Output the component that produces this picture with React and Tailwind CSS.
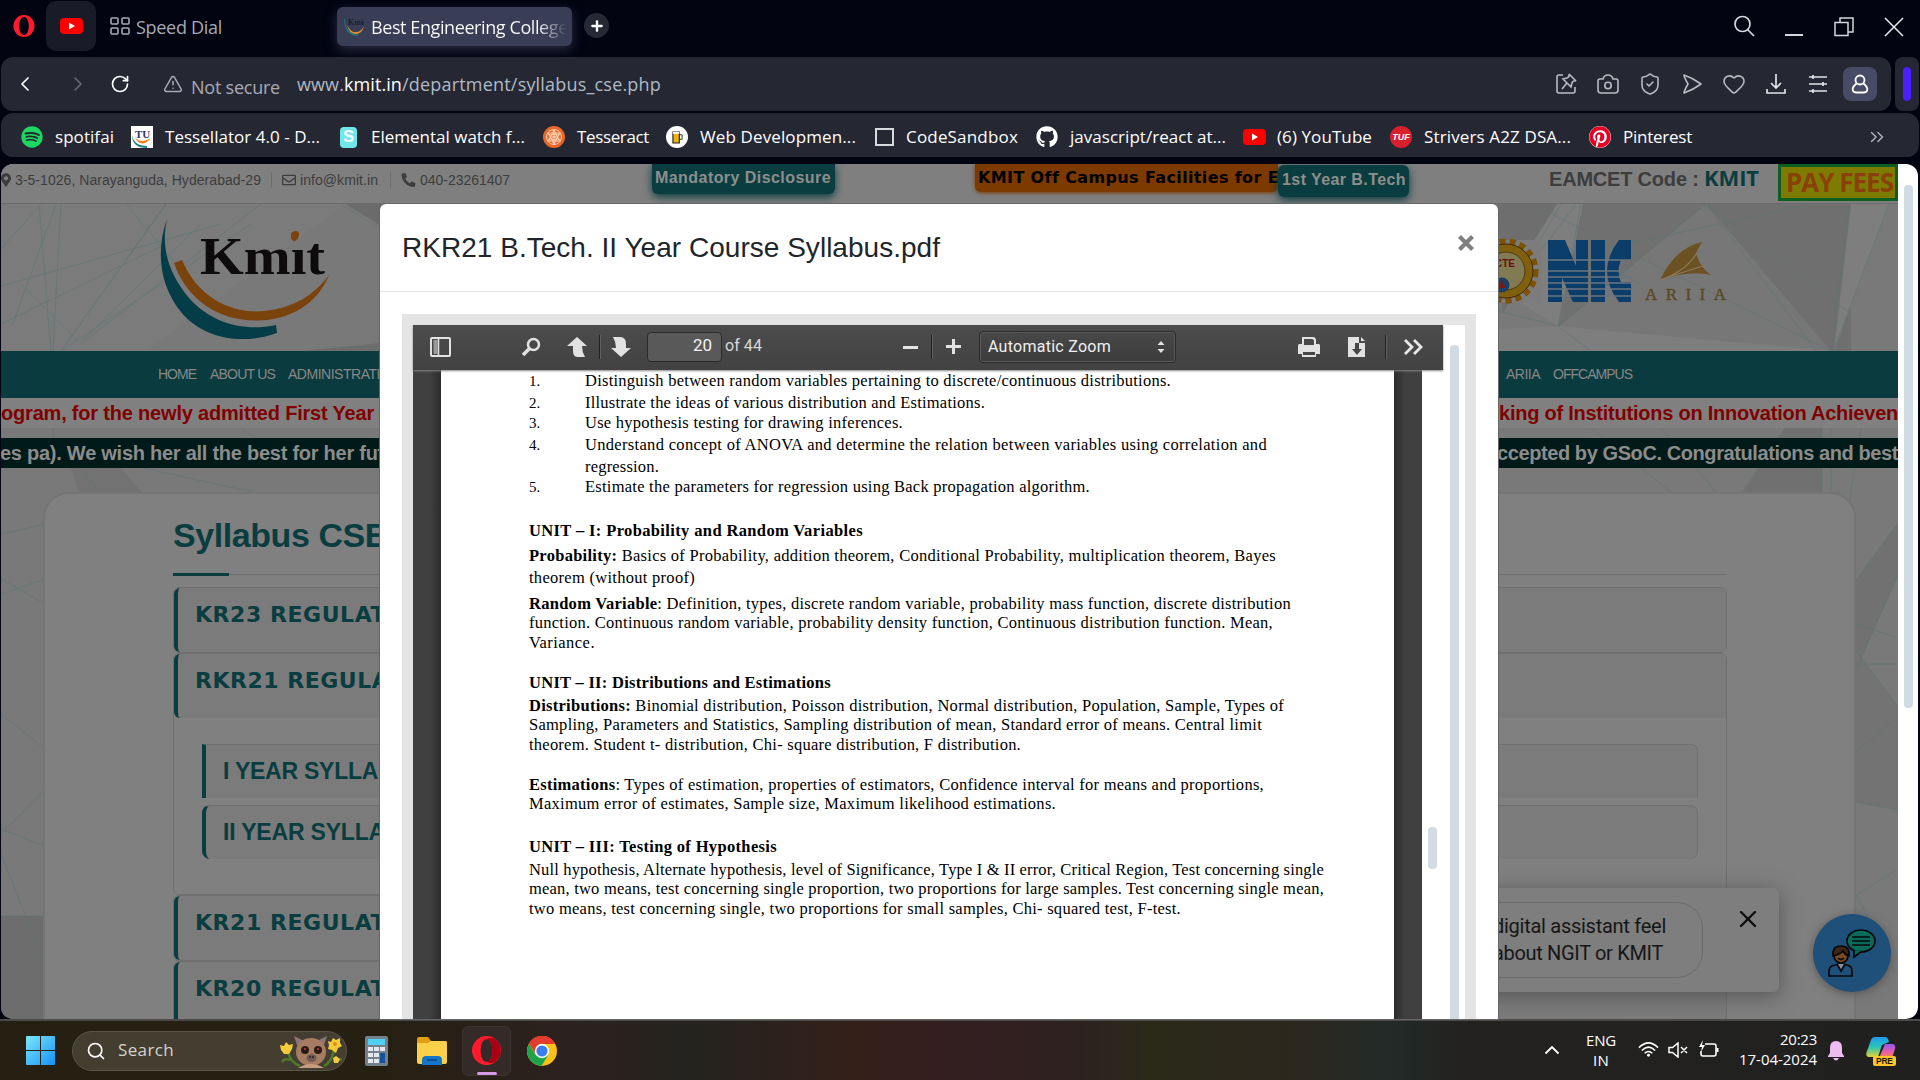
import React, { useLayoutEffect, useRef } from "react";
import { ShieldCheck, Heart, TriangleAlert, Search, RotateCw, ChevronsRight, ChevronLeft, ChevronRight, X, Plus } from "lucide-react";
import { FaSpotify, FaGithub, FaPinterest, FaMapMarkerAlt, FaRegEnvelope, FaPhoneAlt } from "react-icons/fa";

const UI = "font-['Open_Sans','Noto_Sans',sans-serif]";
const SANS = "font-['Liberation_Sans',Arial,sans-serif]";
const VERD = "font-['DejaVu_Sans',Verdana,sans-serif]";

/* A run of text whose tracking is adjusted so that it fills a given width. */
function Fit({ w, className = "", children }) {
  const ref = useRef(null);
  useLayoutEffect(() => {
    const el = ref.current;
    el.style.letterSpacing = "0px";
    const natural = el.getBoundingClientRect().width;
    el.style.letterSpacing = (w - natural) / el.textContent.length + "px";
  }, [w]);
  return (
    <span ref={ref} className={"inline-block shrink-0 whitespace-pre " + className}>
      {children}
    </span>
  );
}

function OperaMark({ className }) {
  return (
    <svg viewBox="0 0 24 24" className={className}>
      <path fillRule="evenodd" fill="#ff1b2d" d="M12 0a12 12 0 1 0 0 24a12 12 0 0 0 0-24zM12 2.6c3 0 4.8 4.2 4.8 9.4s-1.800 9.400-4.800 9.400s-4.800-4.200-4.800-9.400s1.800-9.400 4.800-9.400z" />
      <path fill="#a70014" d="M12 2.600c2-1.400 5-1.400 7.500.2A12 12 0 0 1 19.500 21.200c-2.500 1.600-5.500 1.600-7.500.2c3 0 4.800-4.200 4.800-9.400S15 2.600 12 2.600z" />
    </svg>
  );
}

function OperaOutline({ className }) {
  return (
    <svg viewBox="0 0 24 24" className={className}>
      <path fillRule="evenodd" fill="#ff1b2d" d="M12 0a11.500 12 0 1 0 0 24a11.500 12 0 0 0 0-24zM12 2.200c3.200 0 5.200 4.200 5.200 9.800s-2 9.800-5.200 9.800s-5.200-4.200-5.200-9.800s2-9.800 5.200-9.800z" />
    </svg>
  );
}

function YouTubeMark() {
  return (
    <svg viewBox="0 0 23 16" className="h-4 w-[23px] shrink-0">
      <rect width="23" height="16" rx="4" fill="#ff0000" />
      <path d="M9 4.500l6 3.500l-6 3.500z" fill="#fff" />
    </svg>
  );
}

function KmitFavicon({ className }) {
  return (
    <svg viewBox="0 0 20 20" className={className}>
      <path d="M1 2q0 14 13 15v2Q0 19 0 2z" fill="#1f6f7d" />
      <path d="M3 8q4 8 9 7q5 0 8-6q-2 8-8 8q-7 0-9-9z" fill="#e08a2c" />
      <text x="4" y="8" fontSize="8" fontFamily="Liberation Serif" fontWeight="bold" fill="#1b1d2c">Kmit</text>
    </svg>
  );
}

function TabStrip() {
  return (
    <div className={"flex h-[57px] items-start text-[#a6a9b3] " + UI}>
      <OperaOutline className="ml-3 mt-[15px] h-[22px] w-6 shrink-0" />
      <div className="ml-[10px] mt-px flex h-[50px] w-[50px] shrink-0 items-center justify-center rounded-[10px] bg-[#191b29]">
        <YouTubeMark />
      </div>
      <svg viewBox="0 0 20 18" className="ml-[14px] mt-[17px] h-[18px] w-5 shrink-0" fill="none" stroke="#a6a9b3" strokeWidth="1.600">
        <rect x="1" y="1" width="7" height="6" rx="1" /><rect x="12" y="1" width="7" height="6" rx="1" />
        <rect x="1" y="11" width="7" height="6" rx="1" /><rect x="12" y="11" width="7" height="6" rx="1" />
      </svg>
      <div className="ml-[6px] mt-[15px] w-[201px] text-[18px] leading-6"><Fit w={86}>Speed Dial</Fit></div>
      <div className="mt-[7px] flex h-[39px] w-[235px] shrink-0 items-center overflow-hidden rounded-md bg-[#3a3d56] shadow-[0_4px_12px_#2a2c40]">
        <KmitFavicon className="ml-[7px] h-5 w-5 shrink-0" />
        <div className="ml-[7px] w-[196px] overflow-hidden bg-gradient-to-r from-white from-85% to-[#3a3d56] bg-clip-text text-[18px] leading-6 text-transparent">
          <Fit w={205}>Best Engineering Colleges</Fit>
        </div>
      </div>
      <div className="ml-3 mt-[13px] flex h-[25px] w-[25px] items-center justify-center rounded-full bg-[#262835]">
        <Plus className="h-4 w-4 text-white" strokeWidth={3.500} />
      </div>
      <div className="flex-1" />
      <svg viewBox="0 0 24 24" className="mr-[29px] mt-[15px] h-6 w-6" fill="none" stroke="#d5d6dc" strokeWidth="1.700"><circle cx="10.500" cy="9" r="7.500" /><path d="M15.500 14.500L22 21" /></svg>
      <div className="mr-[31px] mt-[34px] h-[2px] w-[18px] bg-[#d5d6dc]" />
      <svg viewBox="0 0 20 20" className="mr-[30px] mt-[17px] h-5 w-5" fill="none" stroke="#d5d6dc" strokeWidth="1.500"><rect x="1" y="5.500" width="13" height="13" /><path d="M6 5V1h13v14h-5" /></svg>
      <svg viewBox="0 0 20 20" className="mr-4 mt-[17px] h-5 w-5" stroke="#e5e6ea" strokeWidth="1.600"><path d="M1 1l18 18M19 1L1 19" /></svg>
    </div>
  );
}

function AddressBar() {
  const ic = "h-6 w-6 shrink-0";
  return (
    <div className="flex h-[54px] gap-1 pl-px pr-px">
      <div className={"flex w-[1890px] items-center rounded-xl bg-[#252733] text-[18px] leading-6 text-[#a9abb4] " + UI}>
        <ChevronLeft className="ml-3 h-6 w-6 text-white" strokeWidth={1.700} />
        <ChevronRight className="ml-[29px] h-6 w-6 text-[#6b6d78]" strokeWidth={1.500} />
        <RotateCw className="ml-5 h-5 w-5 text-white" strokeWidth={2} />
        <TriangleAlert className="ml-[33px] h-5 w-5 text-[#a9abb4]" strokeWidth={1.800} />
        <div className="ml-2 mt-[5px] w-[106px]"><Fit w={89}>Not secure</Fit></div>
        <div className="-mt-px text-[#aebac6]">
          <Fit w={47}>www.</Fit><Fit w={58} className="text-white">kmit.in</Fit><Fit w={259}>/department/syllabus_cse.php</Fit>
        </div>
        <div className="flex-1" />
        <div className="mr-[14px] flex items-center gap-[18px] text-[#b9bbc3]">
          <svg viewBox="0 0 24 24" className={ic} fill="none" stroke="currentColor" strokeWidth="1.600"><path d="M9 3H5q-2 0-2 2v14q0 2 2 2h14q2 0 2-2v-4" /><path d="M15 2l7 7q-3-1-4 2l-1 4l-8-8l4-1q3-1 2-4zM12.500 11.500L8 17" /></svg>
          <svg viewBox="0 0 24 24" className={ic} fill="none" stroke="currentColor" strokeWidth="1.600"><path d="M2 9q0-2 2-2h3q1-4 5-4t5 4h3q2 0 2 2v9q0 3-3 3H5q-3 0-3-3z" /><circle cx="12" cy="13.500" r="3.200" /></svg>
          <ShieldCheck className={ic} strokeWidth={1.600} />
          <svg viewBox="0 0 24 24" className={ic} fill="none" stroke="currentColor" strokeWidth="1.600" strokeLinejoin="round"><path d="M4 3q9 3 17 9q-8 6-17 9q0-2 4-9Q4 5 4 3z" /></svg>
          <Heart className={ic} strokeWidth={1.600} />
          <svg viewBox="0 0 24 24" className={ic} fill="none" stroke="#e2e3e7" strokeWidth="1.700"><path d="M12 2v14M7 11l5 5l5-5M3 17v4h18v-4" /></svg>
          <svg viewBox="0 0 24 24" className={ic} fill="none" stroke="#e2e3e7" strokeWidth="1.700"><path d="M3 5h18M3 12h18M3 19h18M7 3v4M17 10v4M7 17v4" /></svg>
          <div className="-ml-[5px] flex h-[34px] w-[34px] items-center justify-center rounded-lg bg-[#484b66]">
            <svg viewBox="0 0 18 20" className="h-5 w-[18px]" fill="none" stroke="#fff" strokeWidth="1.800"><circle cx="9" cy="6" r="4.500" /><path d="M5.500 9.500C0 14 1 18 5 18.500h8c4-.5 5-4.500-.5-9" /></svg>
          </div>
        </div>
      </div>
      <div className="flex flex-1 items-center justify-center rounded-lg bg-[#252733]">
        <div className="h-[34px] w-2 rounded bg-[#4b1fff]" />
      </div>
    </div>
  );
}

const round = "flex h-[22px] w-[22px] shrink-0 items-center justify-center rounded-full";
const BOOKMARKS = [
  ["w-[110px]", 59, "spotifai", <FaSpotify className="h-[22px] w-[22px] text-[#1ed760]" />],
  ["w-[206px]", 155, "Tessellator 4.0 - D...",
    <svg viewBox="0 0 22 22" className="h-[22px] w-[22px] bg-white"><path d="M1 9q2 11 15 11v2Q1 22 1 9z" fill="#1f7f8c" /><path d="M3 10q6 9 17 2q-10 12-17-2z" fill="#e88024" /><text x="4" y="12" fontSize="11" fontWeight="bold" fontFamily="Liberation Serif" fill="#34307a">TU</text></svg>],
  ["w-[206px]", 154, "Elemental watch f...",
    <div className="ml-[3px] flex h-[21px] w-[17px] items-center justify-center rounded bg-[#6fe7ea] font-['Liberation_Sans'] text-[16px] font-bold text-white">S</div>],
  ["w-[123px]", 72, "Tesseract",
    <svg viewBox="0 0 22 22" className="h-[22px] w-[22px]" fill="none" stroke="#ffd0b0"><circle cx="11" cy="11" r="11" fill="#e8672a" stroke="none" /><circle cx="11" cy="11" r="7.500" /><circle cx="11" cy="11" r="3" /><path d="M11 3v16M4 7l14 8M18 7L4 15M5 7h12L11 18zM5 15h12L11 4z" /></svg>],
  ["w-[206px]", 156, "Web Developmen...",
    <div className={round + " bg-white"}><svg viewBox="0 0 12 14" className="h-[13px] w-[11px]"><path d="M1 1h7v12H1z" fill="#eab308" stroke="#222" strokeWidth="1.200" /><path d="M8 4h3v5H8" fill="none" stroke="#222" /><path d="M1 1h7v2H1z" fill="#fff" /></svg></div>],
  ["w-[164px]", 112, "CodeSandbox", <div className="ml-[3px] h-[18px] w-[19px] border-2 border-[#d9dade]" />],
  ["w-[207px]", 156, "javascript/react at...", <FaGithub className="h-[22px] w-[22px] text-white" />],
  ["w-[147px]", 95, "(6) YouTube", <YouTubeMark />],
  ["w-[199px]", 147, "Strivers A2Z DSA...", <div className={round + " bg-[#d81f2e] font-['Liberation_Sans'] text-[9px] font-bold italic text-white"}>TUF</div>],
  ["w-[104px]", 69, "Pinterest", <div className={round + " bg-white"}><FaPinterest className="h-[22px] w-[22px] text-[#e60023]" /></div>],
];

function BookmarksBar() {
  return (
    <div className={"mx-px mt-[2px] flex h-11 items-center rounded-xl bg-[#252733] pl-5 pt-1 text-[17px] leading-6 text-white " + UI}>
      {BOOKMARKS.map(([cls, w, label, icon]) => (
        <div key={label} className={"flex shrink-0 items-center " + cls}>
          <div className="w-[34px] shrink-0">{icon}</div>
          <Fit w={w}>{label}</Fit>
        </div>
      ))}
      <ChevronsRight className="ml-[173px] h-[22px] w-[22px] text-[#b5b7bf]" strokeWidth={1.500} />
    </div>
  );
}

function Backdrop() {
  return (
    <svg viewBox="0 0 1897 855" className="absolute left-0 top-0 h-full w-full" preserveAspectRatio="none">
      <rect width="1897" height="855" fill="#797979" />
      <path d="M0 40h345l-200 147H0z" fill="#7b7b7b" />
      <path d="M345 40h35v22z" fill="#6b6b6b" />
      <path d="M300 187l80-8v8z" fill="#6d6d6d" />
      <path d="M1497 40h60l-55 110z" fill="#6e6e6e" />
      <path d="M1556 40l26 0l-25 122l-56-34z" fill="#7e7e7e" />
      <path d="M1582 40h123l-148 124z" fill="#707070" />
      <path d="M1705 40l-148 124l275 23z" fill="#777" />
      <path d="M1705 40h145v147h-20z" fill="#6f6f6f" />
      <path d="M1850 40l38 0l-55 147z" fill="#7e7e7e" />
      <path d="M1497 187v-22l60-3l275 25z" fill="#7e7e7e" />
      <path d="M1784 264h37v66h-80z" fill="#707070" />
      <path d="M70 304l50 0l22 26H78z" fill="#727272" />
      <path d="M0 752h44v103H0z" fill="#6d6d6d" />
      <path d="M1855 416L1897 359V411L1855 506z" fill="#717171" />
      <path d="M1855 486L1897 543V646L1855 638z" fill="#737373" />
      <g stroke="#5b7474" strokeWidth="1" fill="none" opacity="0.550">
        <path d="M0 85L40 40M12 160L55 40M50 187L38 40M52 187L60 40M60 187L165 40M80 180L260 40M0 122L220 60M78 178L20 120M80 178L200 60M60 187L250 60M125 40L200 130M0 160L165 80M340 40l40 25M165 40L60 187M52 264v30M240 264L270 285" />
        <path d="M1497 150L1560 40M1557 162L1580 40M1557 162L1705 40M1500 140L1575 40M1530 40L1830 187M1705 40L1815 187M1705 40L1850 150M1557 162L1497 147M1557 162L1590 187M1832 187L1888 40M1830 187L1848 40M1557 95L1810 40M1640 120L1560 80M1590 264L1670 328M1660 264L1715 328M1784 264L1740 330M1821 264V330M1830 264V330M1860 264L1848 340" />
        <path d="M0 550L44 585M0 370L44 360M0 430L44 415M0 415L44 440M0 670L44 625M0 665L44 682M0 690L44 800M0 752h44M80 304L100 330M142 304L320 343L190 330M1855 416L1897 359M1855 506L1897 411M1855 460l42 14M1855 500h42M1855 486L1897 543M1855 588L1897 553M1855 638L1897 646M1857 730l40-25M1855 730l40 80" />
      </g>
    </svg>
  );
}

function TopBar() {
  const sep = "h-4 w-px shrink-0 bg-[#6d6d6d]";
  return (
    <div className={"relative flex h-10 items-start border-b border-[#6b6b6b] bg-[#7f7f7f] text-[14px] leading-4 text-[#3d3d3d] " + SANS}>
      <div className="flex w-[651px] shrink-0 items-center pt-2">
        <FaMapMarkerAlt className="h-[14px] w-[10px] shrink-0 mr-1" />
        <Fit w={246}>3-5-1026, Narayanguda, Hyderabad-29</Fit>
        <div className={sep + " mx-[10px]"} />
        <FaRegEnvelope className="mr-1 h-[14px] w-[14px]" />
        <Fit w={78}>info@kmit.in</Fit>
        <div className={sep + " ml-3 mr-[10px]"} />
        <FaPhoneAlt className="mr-1 h-[14px] w-[15px]" />
        <Fit w={90}>040-23261407</Fit>
      </div>
      <div className="h-[30px] w-[183px] shrink-0 rounded-b-md bg-[#0a3d40] pl-[3px] pt-1 text-[16px] font-bold leading-5 text-[#8e8e8e] shadow-[0_3px_8px_#0a3d40]">
        <Fit w={176}>Mandatory Disclosure</Fit>
      </div>
      <div className={"ml-[140px] h-7 w-[303px] shrink-0 rounded-b-md bg-[#7d3a00] pl-[3px] pt-1 text-[16px] font-bold leading-5 text-black shadow-[0_1px_4px_#7d3a00] " + VERD}>
        <Fit w={300}>KMIT Off Campus Facilities for E</Fit>
      </div>
      <div className="relative mt-px h-8 w-[131px] shrink-0 rounded-md bg-[#0a3d40] pl-[4px] pt-[5px] text-[16px] font-bold leading-5 text-[#8e8e8e] shadow-[0_3px_8px_#0a3d40]">
        <Fit w={124}>1st Year B.Tech</Fit>
      </div>
      <div className="ml-[140px] w-[229px] pt-[3px] text-[20px] font-bold leading-6">
        <Fit w={155}>EAMCET Code : </Fit>
        <Fit w={55} className={"-mt-1 align-baseline text-[22px] text-[#0a3d40] " + UI}>KMIT</Fit>
      </div>
      <div className={"h-[37px] w-[120px] shrink-0 border-[3px] border-[#0e5e22] bg-[#7e7c00] pl-[5px] pt-px text-[26px] font-bold leading-7 text-[#8a400b] " + UI}>
        <Fit w={107}>PAY FEES</Fit>
      </div>
    </div>
  );
}

function KmitLogo() {
  return (
    <svg viewBox="160 215 175 125" className="ml-[158px] mt-[11px] h-[125px] w-[175px]">
      <path d="M168 219C157 250 160 285 182 312C205 340 245 345 278 333L277 325C245 332 212 323 190 298C168 272 162 245 168 219z" fill="#043c47" />
      <path d="M175 263L183 260C200 300 235 314 265 311C295 308 315 295 330 275C318 305 290 320 258 320.500C220 321 188 300 175 263z" fill="#7a430b" />
      <text x="201" y="274" fontSize="52" fontFamily="Liberation Serif" fontWeight="bold" fill="#0d0b0b" textLength="125" lengthAdjust="spacingAndGlyphs">Kmıt</text>
      <path d="M292 237q-1-6 5-6q5 1 2 7q-2 4-4 3q-3-1-3-4z" fill="#7a430b" />
    </svg>
  );
}

function Partners() {
  return (
    <svg viewBox="1497 238 240 66" className="h-[66px] w-[240px]">
      <path d="M1497 240h45v63h-45z" fill="#7c7c7c" />
      <circle cx="1506" cy="271" r="29" fill="none" stroke="#7d5206" strokeWidth="7" strokeDasharray="6 4" />
      <circle cx="1506" cy="271" r="27" fill="#80600c" stroke="#3f2b08" strokeWidth="1" />
      <circle cx="1506" cy="271" r="19" fill="#827a52" stroke="#4c3a13" strokeWidth="1" />
      <circle cx="1502" cy="285" r="7.500" fill="#1c3f63" /><path d="M1499 288l3-8l3 8z" fill="#80140f" />
      <text x="1495" y="267" fontSize="10" fontFamily="Liberation Sans" fontWeight="bold" fill="#6b0d12">CTE</text>
      <g fill="#0b3d6b">
        <path d="M1548 240h17l11 26v-26h12v62h-15l-11-24v24h-14zM1591 240h14v62h-14zM1631 240v20h-10q-5 11 0 22h10v20h-12q-24-31 0-62z" />
      </g>
      <path d="M1548 260h83M1548 271h83M1548 277h83M1548 283h83M1548 289h83M1548 296h83" stroke="#6b7680" strokeWidth="1.500" />
      <path d="M1660 280Q1675 248 1702 242L1696 253Q1700 268 1711 275Q1690 270 1660 280z" fill="#6c5122" />
      <path d="M1660 280Q1685 272 1697 253M1662 279Q1690 270 1706 265" stroke="#8b7a5c" strokeWidth="1.200" fill="none" />
      <text x="1645" y="300" fontSize="17" fontFamily="Liberation Serif" fill="#5b4a20" stroke="#5b4a20" strokeWidth="0.400" textLength="81" lengthAdjust="spacing">ARIIA</text>
    </svg>
  );
}

function Accordion({ label, w, className = "", children }) {
  return (
    <div className={"rounded-md border border-[#6f6f6f] " + className}>
      <div className="h-16 rounded-l-md border-l-4 border-[#0a3d40] bg-[#7b7b7b] pl-[17px] pt-[14px]">
        <Fit w={w} className={"text-[22px] font-bold leading-[26px] text-[#0a3d40] " + VERD}>{label}</Fit>
      </div>
      {children}
    </div>
  );
}

function SubItem({ label, w, className }) {
  return (
    <div className={"mr-7 ml-7 h-[54px] border-l-4 border-r border-t border-l-[#0a3d40] border-r-[#707070] border-t-[#707070] bg-[#7b7b7b] pl-[17px] pt-[13px] " + className}>
      <Fit w={w} className={"text-[23px] font-bold leading-[26px] text-[#0a3d40] " + SANS}>{label}</Fit>
    </div>
  );
}

function SitePage() {
  const band = "relative flex items-center justify-between overflow-hidden whitespace-nowrap text-[20px] font-bold leading-6 ";
  return (
    <div className="relative ml-px h-[855px] w-[1897px] shrink-0 overflow-hidden rounded-bl-xl rounded-tl-xl">
      <Backdrop />
      <TopBar />
      <div className="relative flex h-[147px] items-start justify-between">
        <KmitLogo />
        <div className="mr-[161px] mt-[34px]"><Partners /></div>
      </div>
      <div className={"relative flex h-[47px] items-center bg-[#0a3b3e] pb-px text-[14px] text-[#888] " + SANS}>
        <Fit w={38} className="ml-[157px]">HOME</Fit>
        <Fit w={65} className="ml-[14px]">ABOUT US</Fit>
        <Fit w={112} className="ml-[13px]">ADMINISTRATION</Fit>
        <Fit w={34} className="ml-[1106px]">ARIIA</Fit>
        <Fit w={79} className="ml-[13px]">OFFCAMPUS</Fit>
      </div>
      <div className={band + "h-[30px] bg-[#808080] text-[#800000] " + SANS}>
        <Fit w={373}>ogram, for the newly admitted First Year</Fit>
        <Fit w={399}>king of Institutions on Innovation Achieven</Fit>
      </div>
      <div className={band + "mt-[10px] h-[30px] bg-[#001a19] text-[#8c8c8c] " + SANS}>
        <Fit w={384} className="-ml-px">es pa). We wish her all the best for her fut</Fit>
        <Fit w={401}>ccepted by GSoC. Congratulations and best</Fit>
      </div>
      <div className="relative ml-[42px] mt-6 h-[560px] w-[1813px] rounded-[26px] border-2 border-[#757575] bg-[#808080] pl-[128px] pr-[127px] pt-[21px]">
        <div className="h-[59px]"><Fit w={214} className={"text-[34px] font-bold leading-10 text-[#0a3d40] " + SANS}>Syllabus CSE</Fit></div>
        <div className="border-b border-[#6f6f6f]" />
        <div className="-mt-[2px] h-[3px] w-14 bg-[#0a3d40]" />
        <Accordion className="mt-[11px]" label="KR23 REGULATION" w={238} />
        <Accordion label="RKR21 REGULATION" w={255}>
          <div className="h-[176px] pt-[26px]">
            <SubItem label="I YEAR SYLLABUS" w={203} className="rounded-tr-md" />
            <SubItem label="II YEAR SYLLABUS" w={210} className="mt-[7px] rounded-lg" />
          </div>
        </Accordion>
        <Accordion label="KR21 REGULATION" w={238} />
        <Accordion label="KR20 REGULATION" w={238} />
      </div>
      <div className="absolute left-[1400px] top-[724px] flex h-[104px] w-[378px] rounded-md bg-[#7e7e7e] pt-[14px] shadow-[0_4px_20px_#555]">
        <div className="h-[76px] w-[302px] rounded-r-[26px] border border-[#6c6c6c] pl-[91px] pt-[10px] font-['Roboto'] text-[20px] leading-[27px] text-[#161616]">
          <Fit w={173}>digital assistant feel</Fit><Fit w={170}>about NGIT or KMIT</Fit>
        </div>
        <X className="ml-[31px] mt-[3px] h-7 w-7 text-[#0c0c0c]" strokeWidth={2} />
      </div>
      <div className="absolute left-[1812px] top-[750px] h-[78px] w-[78px] rounded-full bg-[#1e507a] shadow-[0_2px_10px_#555]">
        <svg viewBox="0 0 78 78" className="h-[78px] w-[78px]" stroke="#06080a" strokeWidth="1.700">
          <ellipse cx="48" cy="27" rx="14" ry="11" fill="#086b59" /><path d="M41 36l0 7l8-6" fill="#086b59" />
          <path d="M39 23h18M39 27h18M39 31h18" />
          <path d="M16 62v-5q0-5 6-6l4-1h4l4 1q5 1 5 6v5z" fill="#1e507a" /><path d="M24 50l4 7l4-7" fill="#8890a0" />
          <circle cx="28" cy="42" r="7" fill="#7a4a22" /><path d="M20 42q-1-10 8-10t8 10q-4-1-6-5q-4 4-10 5z" fill="#3d2413" />
          <path d="M25 44q3 3 6 0" fill="none" />
        </svg>
      </div>
    </div>
  );
}

const PDF_LINES = [
  ["h-[21px]", 586, "", "Distinguish between random variables pertaining to discrete/continuous distributions.", "1."],
  ["h-[22px]", 400, "", "Illustrate the ideas of various distribution and Estimations.", "2."],
  ["h-[20px]", 318, "", "Use hypothesis testing for drawing inferences.", "3."],
  ["h-[22px]", 682, "", "Understand concept of ANOVA and determine the relation between variables using correlation and", "4."],
  ["h-[22px]", 74, "", "regression.", " "],
  ["h-[20px]", 505, "", "Estimate the parameters for regression using Back propagation algorithm.", "5."],
  ["h-[44px]", 334, "UNIT – I: Probability and Random Variables", ""],
  ["h-[25px]", 747, "Probability:", " Basics of Probability, addition theorem, Conditional Probability, multiplication theorem, Bayes"],
  ["h-[22px]", 166, "", "theorem (without proof)"],
  ["h-[26px]", 762, "Random Variable", ": Definition, types, discrete random variable, probability mass function, discrete distribution"],
  ["h-[19px]", 744, "", "function. Continuous random variable, probability density function, Continuous distribution function. Mean,"],
  ["h-[20px]", 66, "", "Variance."],
  ["h-[40px]", 302, "UNIT – II: Distributions and Estimations", ""],
  ["h-[23px]", 755, "Distributions:", " Binomial distribution, Poisson distribution, Normal distribution, Population, Sample, Types of"],
  ["h-[19px]", 733, "", "Sampling, Parameters and Statistics, Sampling distribution of mean, Standard error of means. Central limit"],
  ["h-[20px]", 492, "", "theorem. Student t- distribution, Chi- square distribution, F distribution."],
  ["h-[40px]", 735, "Estimations", ": Types of estimation, properties of estimators, Confidence interval for means and proportions,"],
  ["h-[19px]", 527, "", "Maximum error of estimates, Sample size, Maximum likelihood estimations."],
  ["h-[43px]", 248, "UNIT – III: Testing of Hypothesis", ""],
  ["h-[23px]", 795, "", "Null hypothesis, Alternate hypothesis, level of Significance, Type I & II error, Critical Region, Test concerning single"],
  ["h-[19px]", 795, "", "mean, two means, test concerning single proportion, two proportions for large samples. Test concerning single mean,"],
  ["h-[20px]", 652, "", "two means, test concerning single, two proportions for small samples, Chi- squared test, F-test."],
];

const Sep = ({ className }) => <div className={"h-6 w-px shrink-0 bg-[#222] shadow-[1px_0_0_#606060] " + className} />;

function PdfToolbar() {
  return (
    <div className={"relative z-10 flex h-[45px] w-[1030px] items-center bg-gradient-to-b from-[#4c4c4c] to-[#424242] pb-[2px] text-[#d9d9d9] shadow-[0_1px_2px_#888] " + SANS}>
      <svg viewBox="0 0 21 20" className="ml-[17px] h-5 w-[21px] shrink-0"><rect x="1" y="1" width="19" height="18" rx="1" fill="none" stroke="#e2e2e2" strokeWidth="2" /><rect x="3.500" y="3" width="4" height="14" fill="#9a9a9a" /><path d="M8.500 1v18" stroke="#e2e2e2" strokeWidth="1.500" /></svg>
      <svg viewBox="0 0 20 20" className="ml-[70px] h-5 w-5 shrink-0" fill="none" stroke="#e2e2e2"><circle cx="12.500" cy="7.500" r="5.500" strokeWidth="2.500" /><path d="M8.500 11.500L2 18" strokeWidth="3.500" /></svg>
      <svg viewBox="0 0 20 20" className="ml-[26px] h-5 w-5 shrink-0" fill="#e2e2e2"><path d="M10 0l10 9h-5q0 6 3 11h-7q-5 0-5-6V9H0z" /></svg>
      <Sep className="ml-3" />
      <svg viewBox="0 0 20 20" className="ml-[11px] h-5 w-5 shrink-0" fill="#e2e2e2"><path d="M10 20l10-9h-5V7q0-7-6-7H2q3 5 3 11H0z" /></svg>
      <div className="ml-4 flex h-[30px] w-[75px] shrink-0 items-center justify-end rounded-sm border border-[#2b2b2b] bg-[#595959] pr-[9px] pb-px font-['Roboto'] text-[17px] text-[#f2f2f2]"><Fit w={19}>20</Fit></div>
      <Fit w={37} className="ml-[3px] -mt-px font-['Roboto'] text-[16px]">of 44</Fit>
      <div className="ml-[141px] mt-px h-[3px] w-[15px] shrink-0 bg-[#e2e2e2]" />
      <Sep className="ml-[13px]" />
      <svg viewBox="0 0 15 15" className="ml-[14px] h-[15px] w-[15px] shrink-0" stroke="#e2e2e2" strokeWidth="3"><path d="M7.500 0v15M0 7.500h15" /></svg>
      <div className="ml-[18px] flex h-8 w-[197px] shrink-0 items-center rounded-sm border border-[#2b2b2b] bg-gradient-to-b from-[#484848] to-[#3c3c3c] pl-2 text-[16px] shadow-[inset_0_0_0_1px_#5a5a5a]">
        <Fit w={123} className="font-['Roboto'] text-[#f0f0f0]">Automatic Zoom</Fit>
        <svg viewBox="0 0 8 12" className="ml-[46px] h-3 w-2" fill="#e2e2e2"><path d="M4 0l3.500 4h-7zM4 12l3.500-4h-7z" /></svg>
      </div>
      <svg viewBox="0 0 24 20" className="ml-[121px] h-5 w-6 shrink-0" fill="#e2e2e2"><path fillRule="evenodd" d="M5 0h12l2 2v5h3l1 1v9h-4v3H5v-3H1V8l1-1h3zM7 2v6h10V3.500L15.500 2zM6 15v3h12v-3z" /></svg>
      <svg viewBox="0 0 18 20" className="ml-[27px] h-5 w-[18px] shrink-0" fill="#e2e2e2"><path fillRule="evenodd" d="M0 0h11v6h6v14H0zM7 6v6H4l5 6l5-6h-3V6z" /><path d="M13 0l4 4h-4z" /></svg>
      <Sep className="ml-[19px]" />
      <svg viewBox="0 0 20 16" className="ml-[18px] h-4 w-5 shrink-0" fill="none" stroke="#e8e8e8" strokeWidth="2.800"><path d="M1 1l7 7l-7 7M10 1l7 7l-7 7" /></svg>
    </div>
  );
}

function PdfModal() {
  return (
    <div className="absolute left-[380px] top-[40px] flex h-[815px] w-[1118px] flex-col overflow-hidden rounded-t-md bg-white shadow-[0_0_0_1px_#666]">
      <div className="flex h-[88px] shrink-0 items-start justify-between border-b border-[#e5e5e5] pl-[22px] pr-[22px]">
        <Fit w={538} className={"mt-7 text-[28px] leading-8 text-[#212529] " + SANS}>RKR21 B.Tech. II Year Course Syllabus.pdf</Fit>
        <svg viewBox="0 0 20 20" className="mt-[29px] h-5 w-5" stroke="#7f7f7f" strokeWidth="4.200"><path d="M3.500 3.500l13 13M16.500 3.500l-13 13" /></svg>
      </div>
      <div className="ml-[22px] mt-[22px] flex min-h-0 w-[1074px] flex-1 bg-[#e4e4e4] px-[11px] pt-[11px]">
        <div className="flex w-[1052px] bg-white">
          <div className="flex w-[1030px] flex-col">
            <PdfToolbar />
            <div className="flex min-h-0 flex-1">
              <div className="w-7 bg-gradient-to-r from-[#404040] from-60% to-[#2b2b2b]" />
              <div className="w-[953px] overflow-hidden bg-white pl-[88px] font-['Liberation_Serif',serif] text-[16.500px] leading-5 text-black">
                {PDF_LINES.map(([h, w, bold, text, num], i) => (
                  <div key={i} className={"flex items-end " + h}>
                    {num && <span className="w-14 shrink-0 text-[15px]">{num}</span>}
                    <Fit w={w}>{bold && <b>{bold}</b>}{text}</Fit>
                  </div>
                ))}
              </div>
              <div className="w-7 bg-gradient-to-r from-[#2b2b2b] to-[#404040] to-40%" />
              <div className="flex flex-1 justify-center pt-[457px]"><div className="h-[42px] w-[9px] rounded bg-[#d1dbe4]" /></div>
            </div>
          </div>
          <div className="ml-[7px] mt-5 w-[9px] rounded-t bg-[#d1dbe4]" />
        </div>
      </div>
    </div>
  );
}

function SearchCritter() {
  return (
    <svg viewBox="0 0 62 34" className="ml-auto mr-[4px] h-[34px] w-[62px]">
      <path d="M8 18q2 10 12 14M54 16q-2 12-10 16M10 26q-6-2-8 2M56 28q4-4 6-2" stroke="#4f7a2a" strokeWidth="2.500" fill="none" />
      <path d="M14 2l10 5l-6 7zM47 2l-10 5l6 7z" fill="#8d7478" />
      <ellipse cx="31" cy="18" rx="15" ry="14" fill="#a67c62" /><path d="M18 34q13-8 26 0z" fill="#c79b7e" />
      <circle cx="25" cy="16" r="4" fill="#2b1b17" /><circle cx="38" cy="16" r="4" fill="#2b1b17" />
      <circle cx="25" cy="15" r="1" fill="#d33" /><circle cx="38" cy="15" r="1" fill="#d33" />
      <ellipse cx="31.500" cy="24" rx="5" ry="4" fill="#6f5a55" /><circle cx="30" cy="23" r="1" fill="#222" /><circle cx="33" cy="23" r="1" fill="#222" />
      <path fill="#f4cb3a" d="M0 11l4 1l2-4l3 3l4-1l-1 5l-3 5H4l-3-4zM48 7l3 1l2-4l3 2l4-2v5l2 3l-4 2l-2 5l-4-3l-4-1l1-4zM53 24l3-2l4 3l-2 4h-4z" />
      <circle cx="55" cy="10" r="2" fill="#d99512" />
    </svg>
  );
}

function Taskbar() {
  return (
    <div className={"flex h-[61px] items-center border-t-2 border-[#4b4a48] bg-[linear-gradient(90deg,#262013_0%,#262013_20%,#2c211e_29%,#24231f_36%,#341f19_44.500%,#331f21_51%,#2e2120_56%,#2a2a19_60%,#2c271d_67%,#222a28_72.500%,#232220_76%,#20201f_100%)] text-white " + UI}>
      <svg viewBox="0 0 29 29" className="ml-[26px] h-[29px] w-[29px] shrink-0">
        <defs><linearGradient id="win" x1="0" y1="0" x2="1" y2="1"><stop offset="0" stopColor="#7ce8fd" /><stop offset="1" stopColor="#1591f5" /></linearGradient></defs>
        <path fill="url(#win)" d="M0 1q0-1 1-1h13v14H0zM15 0h13q1 0 1 1v13H15zM0 15h14v14H1q-1 0-1-1zM15 15h14v13q0 1-1 1H15z" />
      </svg>
      <div className="ml-[17px] flex h-10 w-[275px] shrink-0 items-center rounded-full border border-[#5a5446] bg-[#443e30]">
        <Search className="ml-[13px] h-5 w-5" strokeWidth={2} />
        <Fit w={56} className="ml-[12px] -mt-px text-[17px] text-[#d5d2cb]">Search</Fit>
        <SearchCritter />
      </div>
      <svg viewBox="0 0 23 30" className="ml-[18px] h-[30px] w-[23px] shrink-0">
        <rect width="23" height="30" rx="2" fill="#74808c" /><rect x="3" y="3" width="17" height="6" fill="#4fd1f5" />
        <g fill="#e4e9ee"><path d="M3 11h5v4H3zM9 11h5v4H9zM15 11h5v4h-5zM3 17h5v4H3zM9 17h5v4H9zM3 23h5v4H3zM9 23h5v4H9z" /></g><path d="M15 17h5v10h-5z" fill="#14529c" />
      </svg>
      <svg viewBox="0 0 30 28" className="ml-[29px] h-7 w-[30px] shrink-0"><path d="M0 2q0-2 2-2h9l3 4h14q2 0 2 2v6H0z" fill="#e0a010" /><path d="M0 6h11l3-2h14q2 0 2 2v19q0 2-2 2H2q-2 0-2-2z" fill="#fdd04a" /><path d="M5 28v-5q0-4 4-4h12q4 0 4 4v5z" fill="#1477c9" /><path d="M10 23h10" stroke="#0b4f92" strokeWidth="2" /></svg>
      <div className="ml-[15px] flex h-[50px] w-[49px] shrink-0 flex-col items-center rounded-md border border-[#3c322f] bg-[#342a27] pt-[9px]">
        <OperaMark className="h-[29px] w-[29px] shrink-0" /><div className="mt-[7px] h-[3px] w-5 shrink-0 rounded bg-[#d59be8]" />
      </div>
      <svg viewBox="0 0 30 30" className="ml-4 h-[30px] w-[30px] shrink-0">
        <circle cx="15" cy="15" r="15" fill="#fbc116" /><path d="M15 15L2 7.500A15 15 0 0 1 28 7.500H15z" fill="#e33b2e" /><path d="M2 7.500A15 15 0 0 0 14.500 30L21.500 18.500L15 22L8.500 18.800z" fill="#1fa34a" /><path d="M15 8h13A15 15 0 0 0 2 7.500l7 11z" fill="#e33b2e" />
        <circle cx="15" cy="15" r="7.200" fill="#fff" /><circle cx="15" cy="15" r="5.600" fill="#3b7ded" />
      </svg>
      <div className="flex-1" />
      <svg viewBox="0 0 16 10" className="mr-[26px] -mt-[2px] h-[10px] w-4" fill="none" stroke="#fff" strokeWidth="1.800"><path d="M1.500 8.500L8 2l6.500 6.500" /></svg>
      <div className="mr-[22px] -mt-[2px] flex w-[30px] flex-col items-center text-[15px] leading-5"><Fit w={30}>ENG</Fit><Fit w={16}>IN</Fit></div>
      <svg viewBox="0 0 22 17" className="mr-[9px] -mt-[2px] h-[17px] w-[21px]" fill="none" stroke="#fff" strokeWidth="1.600"><path d="M1 6.500q10-10 20 0M4 9.500q7-7 14 0M7 12.500q4-4 8 0" /><circle cx="11" cy="14.500" r="1.500" fill="#fff" stroke="none" /></svg>
      <svg viewBox="0 0 21 16" className="mr-[9px] -mt-[2px] h-4 w-[21px]" fill="none" stroke="#fff" strokeWidth="1.500"><path d="M1 5.500h3.500L10 1v14L4.500 10.500H1zM13 5l6 6M19 5l-6 6" /></svg>
      <svg viewBox="0 0 21 18" className="mr-[20px] -mt-[3px] h-[18px] w-[21px]" fill="none" stroke="#fff" strokeWidth="1.600"><path d="M7 4h9q2 0 2 2v8q0 2-2 2H5q-2 0-2-2v-3" /><path d="M19.500 8v4" strokeWidth="2" /><path d="M5 0L1 7h3l-1 5l4-7H4z" fill="#fff" stroke="none" /></svg>
      <div className="mr-[11px] -mt-1 flex w-[78px] flex-col items-end text-[15px] leading-5"><Fit w={37}>20:23</Fit><Fit w={78}>17-04-2024</Fit></div>
      <svg viewBox="0 0 16 20" className="mr-[22px] h-5 w-4" fill="#eebcf2"><path d="M8 0q6 0 6 7v5l2 3v1H0v-1l2-3V7q0-7 6-7zM5 17h6q-3 5-6 0z" /></svg>
      <div className="mr-6 h-[30px] w-[30px]">
        <svg viewBox="0 0 30 30" className="h-[30px] w-[30px]">
          <defs><linearGradient id="cpa" x1="0" y1="0" x2="0" y2="1"><stop offset="0" stopColor="#1f9bf0" /><stop offset=".5" stopColor="#2ac3b5" /><stop offset="1" stopColor="#e2d334" /></linearGradient><linearGradient id="cpb" x1="0" y1="0" x2="0" y2="1"><stop offset="0" stopColor="#9156f0" /><stop offset=".6" stopColor="#e95fa2" /><stop offset="1" stopColor="#f98a4a" /></linearGradient></defs>
          <path d="M9 1h10q3 0 4 5l-7 3l-4 12H3q-4 0-2-6L5 4q1-3 4-3z" fill="url(#cpa)" /><path d="M19 8h8q3 1 2 5l-3 9H13z" fill="url(#cpb)" />
          <rect x="7" y="20" width="23" height="10" rx="2" fill="#fdc52c" /><text x="10" y="28.300" fontSize="8.500" fontWeight="bold" fontFamily="Liberation Sans" fill="#1d1a10" textLength="17">PRE</text>
        </svg>
      </div>
    </div>
  );
}

export default function App() {
  return (
    <div className="h-[1080px] w-[1920px] overflow-hidden bg-[#020412]">
      <TabStrip />
      <AddressBar />
      <BookmarksBar />
      <div className="relative mt-[7px] flex h-[855px]">
        <SitePage />
        <div className="h-full w-5 rounded-br-xl rounded-tr-xl bg-white pl-[6px] pt-[21px]"><div className="h-[523px] w-[9px] rounded bg-[#d1dbe4]" /></div>
        <PdfModal />
      </div>
      <Taskbar />
    </div>
  );
}
